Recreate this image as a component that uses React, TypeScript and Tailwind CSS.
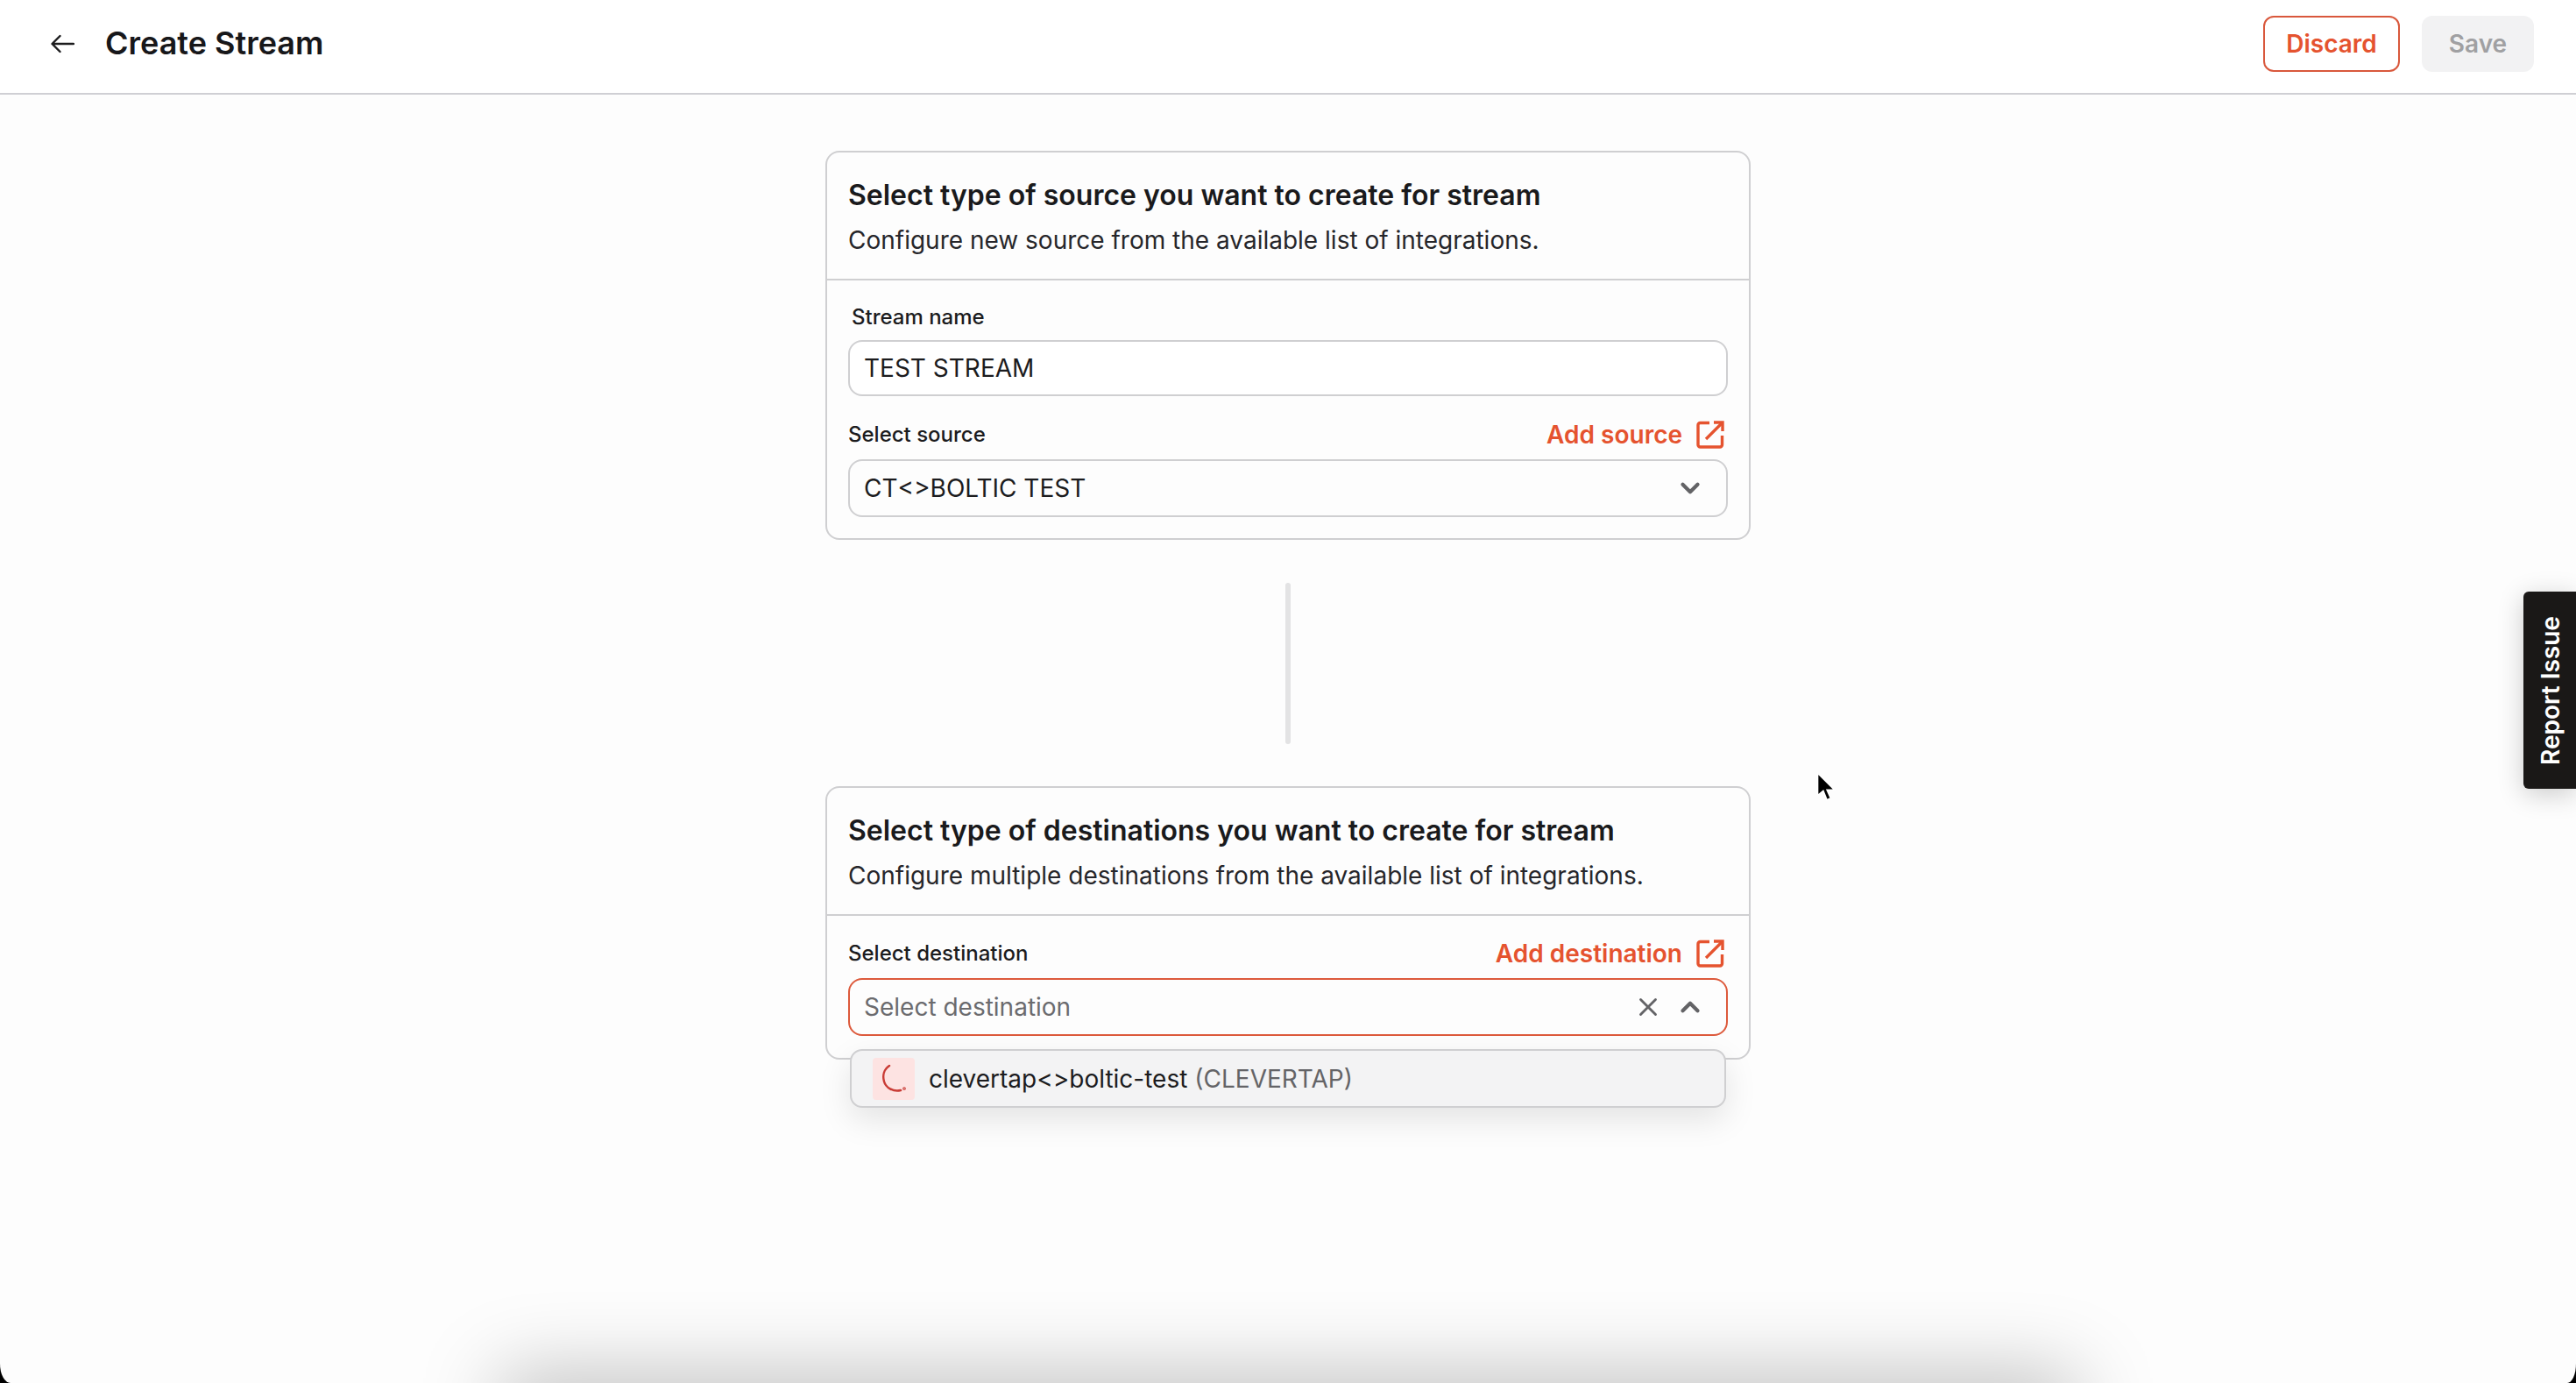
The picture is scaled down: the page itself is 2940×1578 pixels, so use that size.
import { ChevronDown, ChevronUp, X } from "lucide-react";

function ExternalIcon() {
  return (
    <svg width="32" height="32" viewBox="0 0 32 32" fill="none" stroke="#e5532f" strokeWidth="3.400" className="shrink-0 -translate-x-[1px]">
      <path d="M15 2.500H4.500A2.500 2.500 0 0 0 2 5v22.500A2.500 2.500 0 0 0 4.500 30H27a2.500 2.500 0 0 0 2.500-2.500V17" />
      <path d="M11 21 30 2" />
      <path d="M20 2h10v10" />
    </svg>
  );
}

function LabelRow({ label, action }: { label: string; action: string }) {
  return (
    <div className="flex h-[32px] items-center justify-between">
      <span className="text-[24px] font-medium text-[#1c1c1e]">{label}</span>
      <span className="flex items-center gap-[17px] pr-[3px] text-[28px] font-semibold text-[#e5532f]">
        {action}
        <ExternalIcon />
      </span>
    </div>
  );
}

function CardHead({ title, desc }: { title: string; desc: string }) {
  return (
    <div className="flex h-[146px] flex-col border-b-2 border-[#cfcfd1] px-[24px] pt-[28px]">
      <h2 className="text-[32px] leading-[42px] font-semibold text-[#1a1a1c]">{title}</h2>
      <p className="mt-[10px] text-[28px] leading-[40px] text-[#26262a]">{desc}</p>
    </div>
  );
}

export default function App() {
  return (
    <div className="h-[1578px] w-full bg-black">
      <div className="relative h-[1578px] w-full overflow-hidden rounded-bl-[12px_22px] rounded-br-[10px_22px] bg-[#fdfdfd] font-['Inter',sans-serif]">
        <header className="flex h-[108px] items-center justify-between border-b-2 border-[#cfcfd4] bg-white pb-[8px] pl-[58px] pr-[48px]">
          <div className="flex items-center gap-[35px]">
            <svg className="mt-[2px]" width="27" height="22" viewBox="0 0 27 22" fill="none" stroke="#1c1c1e" strokeWidth="2.400" strokeLinecap="round" strokeLinejoin="round">
              <path d="M26 11H2M10.500 2 1.500 11l9 9" />
            </svg>
            <h1 className="text-[36px] font-semibold text-[#17171a]">Create Stream</h1>
          </div>
          <div className="flex items-center gap-[25px] pt-[2px]">
            <button className="h-[64px] w-[156px] rounded-[12px] border-2 border-[#d9583c] text-[28px] font-semibold text-[#e5532f]">Discard</button>
            <button className="h-[64px] w-[128px] rounded-[12px] bg-[#f2f2f3] text-[28px] font-semibold text-[#a0a0a2]">Save</button>
          </div>
        </header>

        <main className="flex flex-col items-center pt-[64px]">
          <section className="h-[444px] w-[1056px] rounded-[16px] border-2 border-[#cfcfd1]">
            <CardHead title="Select type of source you want to create for stream" desc="Configure new source from the available list of integrations." />
            <div className="px-[24px] pt-[26px]">
              <div className="pl-[4px] text-[24px] leading-[32px] font-medium text-[#1c1c1e]">Stream name</div>
              <div className="mt-[10px] flex h-[64px] items-center rounded-[16px] border-2 border-[#cfcfd1] bg-white px-[16px] text-[28px] text-[#1c1c1e]">TEST STREAM</div>
              <div className="mt-[28px]"><LabelRow label="Select source" action="Add source" /></div>
              <div className="mt-[12px] flex h-[66px] items-center justify-between rounded-[16px] border-2 border-[#cfcfd1] pl-[16px] pr-[24px] text-[28px] text-[#1c1c1e]">
                CT&lt;&gt;BOLTIC TEST
                <ChevronDown size={34} strokeWidth={3} className="text-[#636366]" />
              </div>
            </div>
          </section>

          <div className="mb-[48px] mt-[49px] h-[184px] w-[6px] rounded-full bg-[#e3e3e4]" />

          <section className="h-[312px] w-[1056px] rounded-[16px] border-2 border-[#cfcfd1]">
            <CardHead title="Select type of destinations you want to create for stream" desc="Configure multiple destinations from the available list of integrations." />
            <div className="px-[24px] pt-[27px]">
              <LabelRow label="Select destination" action="Add destination" />
              <div className="relative mt-[12px]">
                <div className="flex h-[66px] items-center justify-between rounded-[16px] border-2 border-[#dd5a3c] pl-[16px] pr-[24px] text-[28px] text-[#6b6b6e]">
                  Select destination
                  <div className="flex items-center gap-[14px]">
                    <X size={34} strokeWidth={2} className="text-[#636366]" />
                    <ChevronUp size={34} strokeWidth={3} className="text-[#636366]" />
                  </div>
                </div>
                <div className="absolute left-[2px] right-[2px] top-[81px] flex h-[67px] items-center rounded-[14px] border-2 border-[#cfcfd1] bg-[#f3f3f4] pl-[24px] text-[28px] shadow-[0_14px_36px_rgba(0,0,0,0.1)]">
                  <div className="flex h-[48px] w-[48px] items-center justify-center rounded-[4px] bg-[#fde3e2]">
                    <svg width="32" height="34" viewBox="0 0 32 34" fill="none" stroke="#c93c36" strokeWidth="2.500" strokeLinecap="round">
                      <path d="M11 2C5 6 3 13 5 20c2 7 10 12 19 10" />
                      <circle cx="28" cy="28" r="0.6" />
                    </svg>
                  </div>
                  <span className="ml-[16px] text-[#1c1c1e]">clevertap&lt;&gt;boltic-test</span>
                  <span className="ml-[8px] text-[#646467]">(CLEVERTAP)</span>
                </div>
              </div>
            </div>
          </section>
        </main>

        <div className="absolute right-0 top-[675px] flex h-[225px] w-[60px] items-center justify-center rounded-l-[6px] bg-[#1a1817] pl-[2px] shadow-[0_6px_30px_rgba(0,0,0,0.2)]">
          <span className="-rotate-90 whitespace-nowrap text-[28px] font-semibold text-white">Report Issue</span>
        </div>

        <svg className="absolute left-[2071px] top-[880px]" width="24" height="36" viewBox="0 0 22 34">
          <path d="M3 2v24l6-5 4 10 4-2-4-9h8z" fill="#000" stroke="#fff" strokeWidth="1.500" />
        </svg>

        <div className="absolute bottom-[-60px] left-[580px] right-[580px] h-[60px] shadow-[0_0_90px_10px_rgba(0,0,0,0.26)]" />
      </div>
    </div>
  );
}
